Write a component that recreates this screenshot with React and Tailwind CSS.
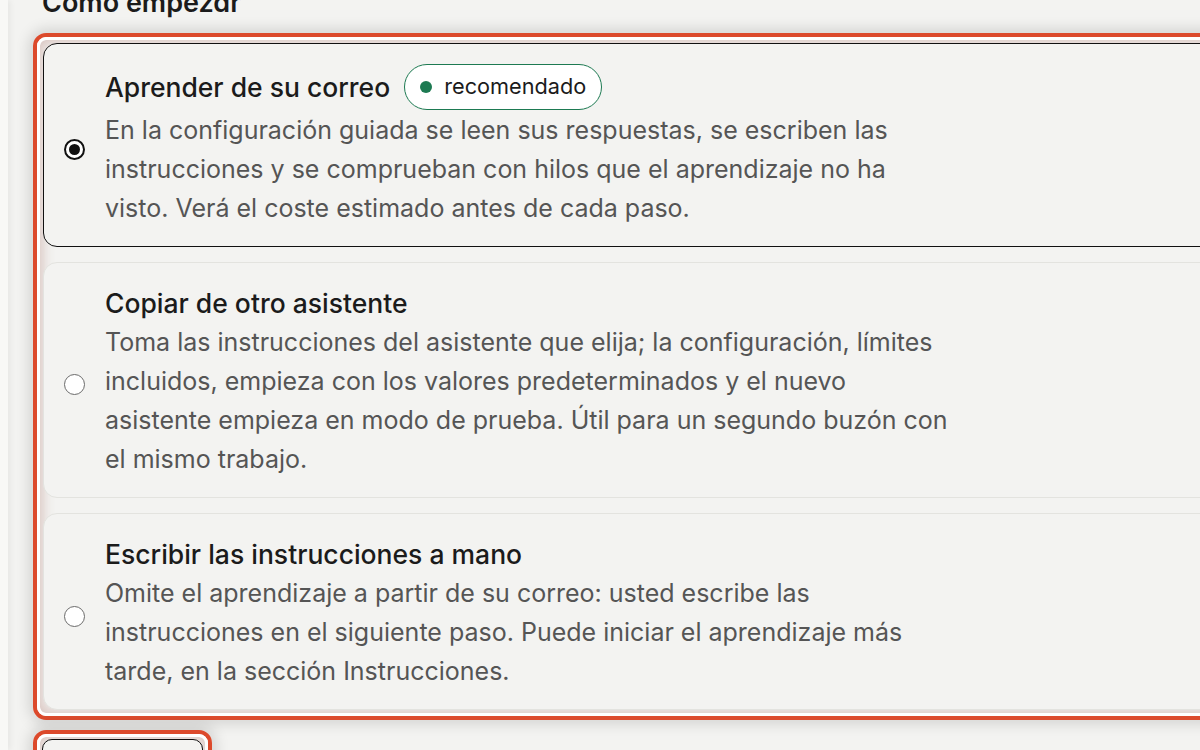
import React from "react";

const font = { fontFamily: "Inter, 'Noto Sans', sans-serif" };

function Radio({ checked }) {
  if (checked) {
    return (
      <div className="w-[21px] h-[21px] shrink-0 rounded-full border-2 border-[#111111] bg-white flex items-center justify-center mt-[7px]">
        <div className="w-[11px] h-[11px] rounded-full bg-[#111111]" />
      </div>
    );
  }
  return (
    <div className="w-[21px] h-[21px] shrink-0 rounded-full border-[1.5px] border-[#6b6b6b] bg-white mt-[7px]" />
  );
}

function Card({ checked, title, badge, desc }) {
  return (
    <div
      className={
        "flex items-center gap-[20px] rounded-[14px] border pl-[20px] pr-[20px] pt-[20px] pb-[18px] bg-[#f3f3f1] " +
        (checked ? "border-[#111111]" : "border-[#e3e3df]")
      }
    >
      <Radio checked={checked} />
      <div className="flex flex-col">
        <div className={"flex items-center gap-[14px] " + (badge ? "h-[46px] mb-[1px]" : "h-[40px]")}>
          <span className="text-[26.5px] leading-[40px] font-[450] text-[#1b1b1b]">{title}</span>
          {badge && (
            <span className="h-[46px] flex items-center gap-[12px] rounded-full border-[1.5px] border-[#1d7a52] bg-white pl-[15px] pr-[15px]">
              <span className="w-[12px] h-[12px] rounded-full bg-[#1d7a52]" />
              <span className="text-[21.7px] text-[#1b1b1b] leading-none">recomendado</span>
            </span>
          )}
        </div>
        <p className="max-w-[848px] text-[25px] leading-[39px] text-[#555555]">{desc}</p>
      </div>
    </div>
  );
}

export default function App() {
  return (
    <div className="w-[1200px] h-[750px] overflow-hidden bg-[#f3f3f1] flex" style={font}>
      <div className="w-[8px] shrink-0 bg-[#f8f8f6] shadow-[2px_0_6px_rgba(0,0,0,0.06)]" />
      <div className="flex-1 pl-[25px] flex flex-col">
        <div
          className="h-[30px] -mt-[12px] mb-[15px] pl-[9px] text-[27px] leading-[30px] font-semibold text-[#1b1b1b]"
          style={{ fontFeatureSettings: "'cv11' 1, 'ss01' 1" }}
        >
          Como empezar
        </div>
        <div className="w-[1300px] shrink-0 rounded-[13px] border-4 border-[#dc4a2c] shadow-[0_0_14px_4px_rgba(0,0,0,0.13)]">
          <div className="rounded-[9px] border-[3px] border-white shadow-[inset_0_0_12px_3px_rgba(150,80,70,0.28)] p-[3px] flex flex-col gap-[15px]">
            <Card
              checked
              badge
              title="Aprender de su correo"
              desc="En la configuración guiada se leen sus respuestas, se escriben las instrucciones y se comprueban con hilos que el aprendizaje no ha visto. Verá el coste estimado antes de cada paso."
            />
            <Card
              title="Copiar de otro asistente"
              desc="Toma las instrucciones del asistente que elija; la configuración, límites incluidos, empieza con los valores predeterminados y el nuevo asistente empieza en modo de prueba. Útil para un segundo buzón con el mismo trabajo."
            />
            <Card
              title="Escribir las instrucciones a mano"
              desc="Omite el aprendizaje a partir de su correo: usted escribe las instrucciones en el siguiente paso. Puede iniciar el aprendizaje más tarde, en la sección Instrucciones."
            />
          </div>
        </div>
        <div className="mt-[10px] w-[179px] shrink-0 rounded-[13px] border-4 border-[#dc4a2c] shadow-[0_0_14px_4px_rgba(0,0,0,0.13)]">
          <div className="rounded-[9px] border-[3px] border-white shadow-[inset_0_0_10px_2px_rgba(150,80,70,0.28)] p-[2px]">
            <div className="h-[60px] rounded-[10px] border border-[#111111] bg-[#f3f3f1]" />
          </div>
        </div>
      </div>
    </div>
  );
}
